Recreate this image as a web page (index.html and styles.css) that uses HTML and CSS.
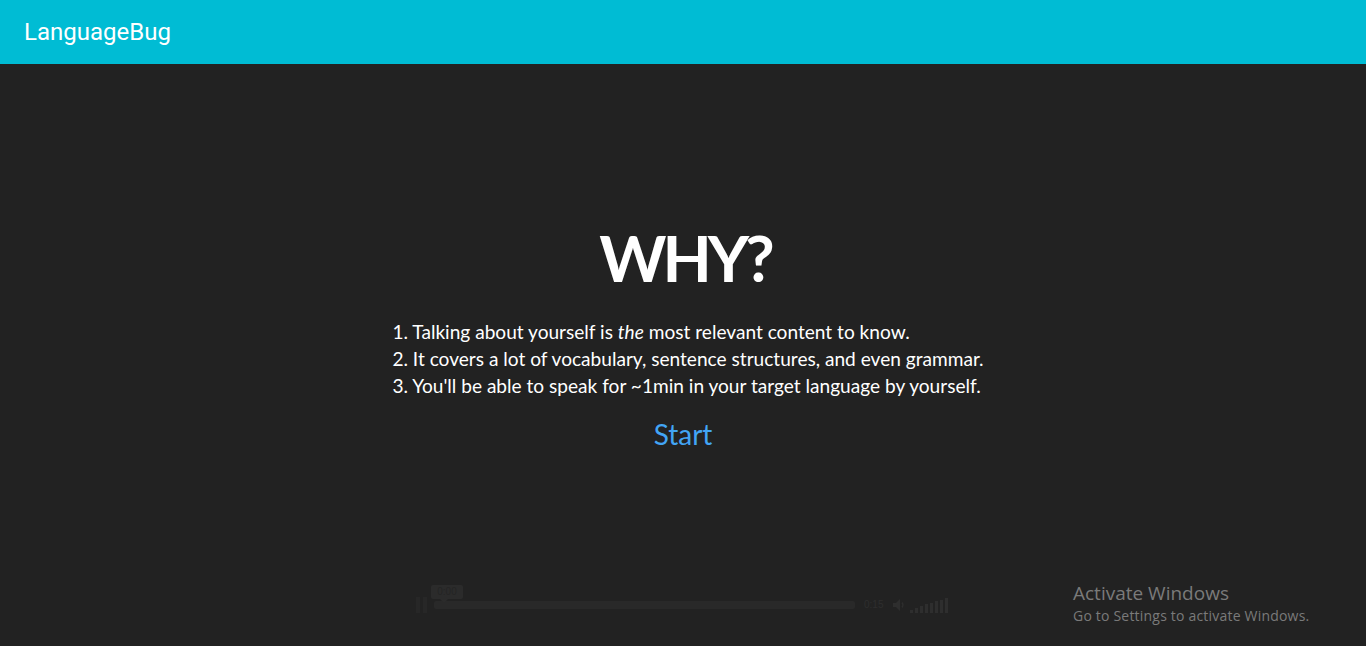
FILE: index.html
```html
<!DOCTYPE html>
<html lang="en">
<head>
<meta charset="utf-8">
<title>LanguageBug</title>
<link rel="stylesheet" href="styles.css">
</head>
<body>
<header class="topbar">
  <span class="brand">LanguageBug</span>
</header>
<main class="intro">
  <h1 class="title">WHY?</h1>
  <ol class="reasons">
    <li>1. Talking about yourself is <em>the</em> most relevant content to know.</li>
    <li>2. It covers a lot of vocabulary, sentence structures, and even grammar.</li>
    <li>3. You'll be able to speak for ~1min in your target language by yourself.</li>
  </ol>
  <a class="start" href="#">Start</a>
</main>
<div class="player">
  <div class="pause"><span></span><span></span></div>
  <div class="track">
    <div class="tip">0:00</div>
  </div>
  <span class="time">0:15</span>
  <svg class="speaker" width="14" height="14" viewBox="0 0 14 14"><path d="M1 5h3l4-4v12l-4-4H1z" fill="#2e2e2e"/><path d="M10 4.5q2 2.5 0 5" stroke="#2e2e2e" stroke-width="1.3" fill="none"/></svg>
  <div class="vol">
    <span style="height:3px"></span><span style="height:5px"></span><span style="height:7px"></span><span style="height:9px"></span><span style="height:10px"></span><span style="height:12px"></span><span style="height:13px"></span><span style="height:15px"></span>
  </div>
</div>
<div class="watermark">
  <div class="wm-title">Activate Windows</div>
  <div class="wm-sub">Go to Settings to activate Windows.</div>
</div>
</body>
</html>
```
FILE: styles.css
```css
html, body {
  margin: 0;
  padding: 0;
  height: 100%;
}
body {
  background: #222222;
  font-family: "Lato", "Open Sans", sans-serif;
  color: #ffffff;
  overflow: hidden;
  position: relative;
}
.topbar {
  height: 64px;
  background: #00bcd4;
  display: flex;
  align-items: center;
  padding-left: 24px;
}
.brand {
  font-family: "Roboto", sans-serif;
  font-size: 24px;
  color: #ffffff;
}
.intro {
  display: flex;
  flex-direction: column;
  align-items: center;
  padding-top: 154px;
}
.title {
  margin: 0;
  font-size: 64px;
  font-weight: 700;
  letter-spacing: -4px;
  line-height: 80px;
  padding-left: 4px;
}
.reasons {
  list-style: none;
  margin: 20px 0 0 0;
  padding: 0 0 0 10px;
  font-size: 19.1px;
  line-height: 27px;
}
.start {
  margin-top: 18px;
  font-size: 28px;
  line-height: 34px;
  color: #42a5f5;
  text-decoration: none;
}
.player {
  position: absolute;
  left: 416px;
  top: 586px;
  width: 540px;
  height: 30px;
  display: flex;
  align-items: flex-end;
}
.pause {
  display: flex;
  gap: 3px;
  height: 16px;
  margin-bottom: 3px;
}
.pause span {
  width: 4px;
  background: #272727;
}
.track {
  position: relative;
  margin-left: 7px;
  width: 421px;
  height: 8px;
  margin-bottom: 7px;
  background: #292929;
  border-radius: 2px;
}
.tip {
  position: absolute;
  left: -3px;
  top: -16px;
  width: 32px;
  height: 14px;
  background: #2b2b2b;
  border-radius: 2px;
  font-family: "Liberation Sans", sans-serif;
  font-size: 10px;
  line-height: 14px;
  text-align: center;
  color: #242424;
}
.tip::after {
  content: "";
  position: absolute;
  left: 9px;
  top: 14px;
  border: 4px solid transparent;
  border-top-color: #2b2b2b;
}
.time {
  margin-left: 9px;
  font-family: "Liberation Sans", sans-serif;
  font-size: 10px;
  color: #2e2e2e;
  margin-bottom: 6px;
}
.speaker {
  margin-left: 9px;
  margin-bottom: 4px;
}
.vol {
  display: flex;
  align-items: flex-end;
  gap: 2px;
  margin-left: 4px;
  margin-bottom: 3px;
}
.vol span {
  width: 3px;
  background: #2e2e2e;
}
.watermark {
  position: absolute;
  left: 1073px;
  top: 581px;
  font-family: "Open Sans", "DejaVu Sans", sans-serif;
  color: #7a7a7a;
}
.wm-title {
  font-size: 19px;
  line-height: 24px;
}
.wm-sub {
  font-size: 14px;
  letter-spacing: 0.2px;
  line-height: 22px;
}
```
